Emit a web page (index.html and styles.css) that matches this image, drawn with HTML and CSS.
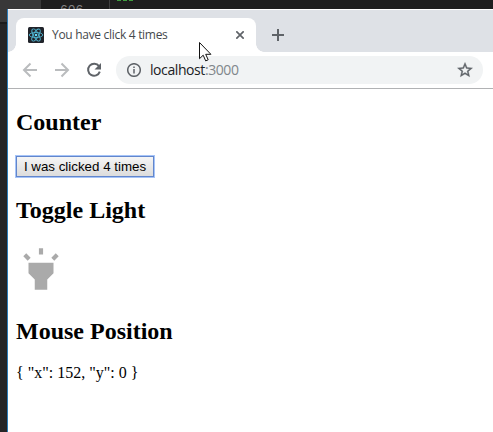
FILE: index.html
```html
<!DOCTYPE html>
<html lang="en">
<head>
<meta charset="utf-8">
<title>You have click 4 times</title>
<link rel="stylesheet" href="styles.css">
</head>
<body>
<div class="desktop">
  <div class="editor">
    <div class="sidebar"></div>
    <div class="gutter">606</div>
    <div class="code"><span class="squiggle"></span></div>
  </div>
  <div class="window">
    <header class="tabs">
      <div class="tab">
        <svg class="favicon" viewBox="0 0 16 16">
          <rect width="16" height="16" rx="1.5" fill="#20232a"/>
          <g fill="none" stroke="#4fb3cf" stroke-width=".9">
            <ellipse cx="8" cy="8" rx="6.8" ry="2.6"/>
            <ellipse cx="8" cy="8" rx="6.8" ry="2.6" transform="rotate(60 8 8)"/>
            <ellipse cx="8" cy="8" rx="6.8" ry="2.6" transform="rotate(120 8 8)"/>
          </g>
          <circle cx="8" cy="8" r="1.3" fill="#61dafb"/>
        </svg>
        <span class="tab-title">You have click 4 times</span>
        <svg class="close" viewBox="0 0 8 8"><path d="M.3.3l7.4 7.4M7.7.3L.3 7.7"/></svg>
      </div>
      <svg class="plus" viewBox="0 0 12 12"><path d="M6 0v12M0 6h12"/></svg>
    </header>
    <nav class="toolbar">
      <svg class="nav muted" viewBox="0 0 16 16"><path d="M15 8H2M8.5 1.5L2 8l6.5 6.5"/></svg>
      <svg class="nav muted" viewBox="0 0 16 16"><path d="M1 8h13M7.5 1.5L14 8l-6.5 6.5"/></svg>
      <svg class="nav" viewBox="0 0 16 16"><path d="M13 4.200A6 6 0 1 0 13.800 9.700"/><path class="solid" d="M15 1v6.500H8.500z"/></svg>
      <div class="address">
        <svg class="info" viewBox="0 0 14 14"><circle cx="7" cy="7" r="6.300"/><path d="M7 6v4.500M7 3.400v1.500"/></svg>
        <span class="url">localhost<span class="port">:3000</span></span>
        <svg class="star" viewBox="0 0 24 24"><path d="M22 9.240l-7.190-.62L12 2 9.190 8.630 2 9.240l5.460 4.730L5.820 21 12 17.270 18.180 21l-1.630-7.030L22 9.240zM12 15.400l-3.760 2.270 1-4.280-3.320-2.880 4.380-.38L12 6.100l1.710 4.040 4.380.38-3.320 2.880 1 4.280L12 15.400z"/></svg>
      </div>
    </nav>
    <main class="page">
      <h2>Counter</h2>
      <button class="counter">I was clicked 4 times</button>
      <h2 class="light-title">Toggle Light</h2>
      <svg class="light" viewBox="0 0 24 24"><path d="M6 14l3 3v5h6v-5l3-3V9H6zM11 2h2v3h-2zM3.500 5.875L4.914 4.460l2.120 2.122L5.620 7.997zM16.960 6.585l2.123-2.120 1.414 1.414L18.375 8z"/></svg>
      <h2 class="mouse-title">Mouse Position</h2>
      <div class="position">{ "x": 152, "y": 0 }</div>
    </main>
  </div>
  <svg class="cursor" viewBox="0 0 13 20"><path d="M.5.500v16.200l3.700-3.500 2.500 5.700 2.500-1.100-2.500-5.500h5.200z"/></svg>
</div>
</body>
</html>
```
FILE: styles.css
```css
* { box-sizing: border-box; }
body { margin: 0; overflow: hidden; }
svg { display: block; flex: none; }
.desktop { position: relative; width: 493px; height: 432px; background: #1e1e1e; padding: 9px 0 0 7px; }
.editor { position: absolute; inset: 0; display: flex; }
.sidebar { width: 41px; background: linear-gradient(#383838 22px, #1b1b1b 22px, #1b1b1b 24px, #252526 24px); }
.gutter { width: 69px; padding: 3px 0 0 19px; border-right: 1px solid #404040; font: 13px/16px "Liberation Mono", monospace; color: #858585; }
.squiggle { display: block; width: 16px; height: 1px; margin-left: 7px; background: repeating-linear-gradient(90deg, #3f9d3f 0 4px, transparent 4px 6px); }
.window { position: relative; height: 423px; background: #fff; border-left: 1px solid #2b7cb8; }
.tabs { display: flex; height: 43px; padding: 8px 0 0 8px; background: #dee1e6; border-top: 1px solid #fff; }
.tab { position: relative; display: flex; align-items: center; width: 240px; height: 34px; padding: 0 12px; background: #fff; border-radius: 8px 8px 0 0; }
.tab::before, .tab::after { content: ""; position: absolute; bottom: 0; width: 8px; height: 8px; }
.tab::before { left: -8px; background: radial-gradient(circle at 0 0, transparent 7.5px, #fff 8px); }
.tab::after { right: -8px; background: radial-gradient(circle at 100% 0, transparent 7.5px, #fff 8px); }
.favicon { width: 16px; height: 16px; }
.tab-title { flex: 1; margin: -1px 0 0 8px; font: 12px/16px "Open Sans", sans-serif; letter-spacing: -.3px; color: #45484c; white-space: nowrap; }
.close { width: 8px; height: 8px; fill: none; stroke: #5f6368; stroke-width: 1.7; }
.plus { width: 12px; height: 12px; margin: 11px 0 0 16px; fill: none; stroke: #5f6368; stroke-width: 2; }
.toolbar { display: flex; align-items: center; height: 37px; padding: 0 10px 1px 14px; border-bottom: 1px solid #b1b2b4; }
.nav { width: 16px; height: 16px; margin-right: 16px; fill: none; stroke: #5f6368; stroke-width: 2; }
.muted { stroke: #babcbe; }
.nav .solid { fill: #5f6368; stroke: none; }
.address { display: flex; align-items: center; flex: 1; height: 28px; margin: 1px 0 0 -2px; padding: 0 9px 0 11px; border-radius: 14px; background: #f1f3f4; }
.info { width: 14px; height: 14px; fill: none; stroke: #5f6368; stroke-width: 1.5; }
.url { flex: 1; margin-left: 9px; font: 14px/18px "Open Sans", sans-serif; letter-spacing: -.42px; color: #202124; }
.port { color: #80868b; }
.star { width: 18px; height: 18px; fill: #5f6368; stroke: #5f6368; stroke-width: .5; }
.page { padding: 20px 8px; font: 16px/18px "Liberation Serif", serif; color: #000; }
h2 { margin: 0; font-size: 24px; line-height: 27px; }
.counter { display: block; width: 138px; height: 21px; margin: 20px 0 0; padding: 0; border: 1px solid #6286cc; outline: 1px solid #a6c4f8; background: linear-gradient(#f5f5f5, #dcdcdc); font: 13.333px/19px "Liberation Sans", sans-serif; color: #000; white-space: nowrap; }
.light-title { margin-top: 20px; }
.light { width: 50px; height: 50px; margin-top: 20px; fill: #aaa; }
.mouse-title { margin-top: 24px; }
.position { margin-top: 19px; }
.cursor { position: absolute; left: 199px; top: 42px; width: 13px; height: 20px; fill: #fff; stroke: #111; stroke-width: 1; }
```
